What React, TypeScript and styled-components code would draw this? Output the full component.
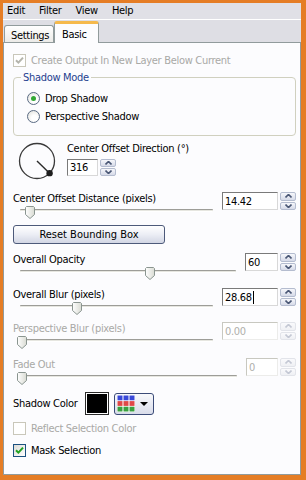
import { FC } from 'react';
import styled, { createGlobalStyle, css } from 'styled-components';

const GlobalStyle = createGlobalStyle`
	html, body {
		margin: 0;
		padding: 0;
		background: #ffffff;
	}
	body {
		font-family: "DejaVu Sans Condensed", "Liberation Sans", sans-serif;
		font-size: 11px;
		letter-spacing: -0.3px;
		color: #000000;
	}
	* {
		box-sizing: border-box;
	}
`;

const MENU = ['Edit', 'Filter', 'View', 'Help'];

type ChevronProps = { down?: boolean; disabled?: boolean };

const Chevron: FC<ChevronProps> = ({ down = false, disabled = false }) => (
	<svg width="7" height="4" viewBox="0 0 7 4">
		<polyline
			points={down ? '0.5,0.5 3.5,3.5 6.5,0.5' : '0.5,3.5 3.5,0.5 6.5,3.5'}
			fill="none"
			stroke={disabled ? '#c4c8d4' : '#4a5775'}
			strokeWidth="1.6"
		/>
	</svg>
);

type SpinFieldProps = {
	value: string;
	width: number;
	height?: number;
	disabled?: boolean;
	caret?: boolean;
};

const SpinField: FC<SpinFieldProps> = ({ value, width, height = 18, disabled = false, caret = false }) => (
	<SpinWrap>
		<SpinInput $width={width} $height={height} $disabled={disabled}>
			{value}
			{caret && <Caret />}
		</SpinInput>
		<SpinButtons $height={height}>
			<SpinButton $disabled={disabled}>
				<Chevron disabled={disabled} />
			</SpinButton>
			<SpinButton $disabled={disabled}>
				<Chevron down disabled={disabled} />
			</SpinButton>
		</SpinButtons>
	</SpinWrap>
);

const Slider: FC<{ value: number }> = ({ value }) => (
	<SliderBody>
		<Track />
		<Thumb style={{ left: `calc((100% - 10px) * ${value / 100})` }}>
			<svg width="10" height="13" viewBox="0 0 10 13">
				<defs>
					<linearGradient id="thumbFill" x1="0" y1="0" x2="1" y2="0">
						<stop offset="0" stopColor="#ffffff" />
						<stop offset="1" stopColor="#d9dbd3" />
					</linearGradient>
				</defs>
				<path d="M1.5 0.5 H8.5 L9.5 1.5 V8.5 L5 12.5 L0.5 8.5 V1.5 Z" fill="url(#thumbFill)" stroke="#8a9590" />
			</svg>
		</Thumb>
	</SliderBody>
);

type SliderRowProps = {
	label: string;
	value: string;
	width: number;
	percent: number;
	disabled?: boolean;
	caret?: boolean;
	gap: number;
};

const SliderRow: FC<SliderRowProps> = ({ label, value, width, percent, disabled = false, caret = false, gap }) => (
	<SliderGrid $gap={gap}>
		<RowLabel $disabled={disabled}>{label}</RowLabel>
		<SpinCell>
			<SpinField value={value} width={width} disabled={disabled} caret={caret} />
		</SpinCell>
		<Slider value={percent} />
	</SliderGrid>
);

const Check: FC<{ checked?: boolean; disabled?: boolean }> = ({ checked = false, disabled = false }) => (
	<CheckBox $disabled={disabled}>
		{checked && (
			<svg width="9" height="9" viewBox="0 0 9 9">
				<polyline
					points="1,4.2 3.4,6.6 8,1.6"
					fill="none"
					stroke={disabled ? '#b4b4ac' : '#21a121'}
					strokeWidth="2"
				/>
			</svg>
		)}
	</CheckBox>
);

const Dial: FC<{ degrees: number }> = ({ degrees }) => {
	const r = 17.5;
	const rad = (degrees * Math.PI) / 180;
	const x = 19 + r * Math.cos(rad);
	const y = 19 - r * Math.sin(rad);
	return (
		<svg width="38" height="38" viewBox="0 0 38 38">
			<circle cx="19" cy="19" r={r} fill="none" stroke="#3a3a3a" strokeWidth="1.3" />
			<line x1="19" y1="19" x2={x} y2={y} stroke="#2a2a2a" strokeWidth="1.4" />
			<circle cx={x} cy={y} r="3.2" fill="#1e1e1e" />
		</svg>
	);
};

const PaletteIcon: FC = () => (
	<svg width="18" height="17" viewBox="0 0 18 17">
		<rect x="0" y="0" width="18" height="17" fill="#ffffff" />
		{[0, 1, 2].map((row) =>
			[0, 1, 2].map((col) => (
				<rect
					key={`${row}-${col}`}
					x={col * 6 + 0.5}
					y={row * 5.6 + 0.5}
					width="5"
					height="4.8"
					fill={['#3848d8', '#e04848', '#3aa040'][row]}
				/>
			))
		)}
	</svg>
);

const App: FC = () => (
	<>
		<GlobalStyle />
		<Frame>
			<MenuBar>
				{MENU.map((item) => (
					<MenuItem key={item}>{item}</MenuItem>
				))}
			</MenuBar>
			<TabStrip>
				<Tab>Settings</Tab>
				<Tab $active>Basic</Tab>
			</TabStrip>
			<Panel>
				<CheckRow $gap={11}>
					<Check checked disabled />
					<Caption $disabled>Create Output In New Layer Below Current</Caption>
				</CheckRow>

				<Group>
					<Legend>Shadow Mode</Legend>
					<RadioRow>
						<Radio $selected />
						<Caption>Drop Shadow</Caption>
					</RadioRow>
					<RadioRow>
						<Radio />
						<Caption>Perspective Shadow</Caption>
					</RadioRow>
				</Group>

				<DialRow>
					<Dial degrees={316} />
					<DialControls>
						<RowLabel>Center Offset Direction (°)</RowLabel>
						<SpinField value="316" width={31} height={17} />
					</DialControls>
				</DialRow>

				<SliderRow label="Center Offset Distance (pixels)" value="14.42" width={56} percent={4.2} gap={12} />

				<PushButton>Reset Bounding Box</PushButton>

				<SliderRow label="Overall Opacity" value="60" width={33} percent={60.6} gap={9} />
				<SliderRow label="Overall Blur (pixels)" value="28.68" width={56} percent={29} caret gap={7} />
				<SliderRow label="Perspective Blur (pixels)" value="0.00" width={56} percent={0} disabled gap={6} />
				<SliderRow label="Fade Out" value="0" width={32} percent={0} disabled gap={8} />

				<ColorRow>
					<Caption>Shadow Color</Caption>
					<Swatch />
					<PaletteButton>
						<PaletteIcon />
						<DropArrow />
					</PaletteButton>
				</ColorRow>

				<CheckRow $gap={7}>
					<Check disabled />
					<Caption $disabled>Reflect Selection Color</Caption>
				</CheckRow>
				<CheckRow $gap={9}>
					<Check checked />
					<Caption>Mask Selection</Caption>
				</CheckRow>
			</Panel>
		</Frame>
	</>
);

const Frame = styled.div`
	width: 306px;
	height: 480px;
	border-style: solid;
	border-color: #e57d25;
	border-width: 3px 5px 5px 3px;
	background: #dedee4;
	display: flex;
	flex-direction: column;
`;

const MenuBar = styled.div`
	height: 17px;
	display: flex;
	align-items: center;
	padding-left: 4px;
	gap: 14px;
	border-bottom: 1px solid #ffffff;
	background: #e0e0e6;
`;

const MenuItem = styled.span`
	line-height: 14px;
`;

const TabStrip = styled.div`
	height: 22px;
	display: flex;
	align-items: flex-end;
	padding-left: 1px;
`;

const Tab = styled.div<{ $active?: boolean }>`
	position: relative;
	display: flex;
	align-items: center;
	border: 1px solid #919b9c;
	border-bottom: none;
	border-radius: 3px 3px 0 0;
	${(props) =>
		props.$active
			? css`
					z-index: 1;
					width: 45px;
					height: 22px;
					margin-bottom: -1px;
					padding: 1px 0 0 7px;
					background: #fcfcfe;
					border-top: 3px solid #f5b94c;
			  `
			: css`
					width: 50px;
					height: 17px;
					padding: 2px 0 0 6px;
					background: linear-gradient(#ffffff, #ecebe8);
			  `}
`;

const Panel = styled.div`
	flex: 1;
	display: flex;
	flex-direction: column;
	background: #fcfcfe;
	border: 1px solid #919b9c;
	padding: 0 4px 0 9px;
`;

const Caption = styled.span<{ $disabled?: boolean }>`
	line-height: 14px;
	white-space: nowrap;
	color: ${(props) => (props.$disabled ? '#a9a9a6' : '#000000')};
`;

const RowLabel = styled(Caption)`
	display: block;
`;

const CheckRow = styled.div<{ $gap: number }>`
	display: flex;
	align-items: center;
	gap: 5px;
	height: 13px;
	margin-top: ${(props) => props.$gap}px;
`;

const CheckBox = styled.span<{ $disabled: boolean }>`
	width: 13px;
	height: 13px;
	display: flex;
	align-items: center;
	justify-content: center;
	border: 1px solid ${(props) => (props.$disabled ? '#c9c7ba' : '#1c5180')};
	background: ${(props) => (props.$disabled ? '#ffffff' : 'linear-gradient(135deg, #dcdcd7, #ffffff)')};
`;

const Group = styled.fieldset`
	margin: 4px 0 0;
	padding: 8px 0 12px 13px;
	border: 1px solid #d0d0bf;
	border-radius: 4px;
	display: flex;
	flex-direction: column;
	gap: 5px;
`;

const Legend = styled.legend`
	margin-left: -6px;
	padding: 0 2px;
	line-height: 13px;
	color: #1f3f8f;
`;

const RadioRow = styled.div`
	display: flex;
	align-items: center;
	gap: 5px;
	height: 13px;
`;

const Radio = styled.span<{ $selected?: boolean }>`
	width: 13px;
	height: 13px;
	border-radius: 50%;
	border: 1px solid #5a6b84;
	background: radial-gradient(circle at 60% 65%, #ffffff 30%, #dcdcd6);
	display: flex;
	align-items: center;
	justify-content: center;
	&::after {
		content: '';
		width: 5px;
		height: 5px;
		border-radius: 50%;
		background: ${(props) => (props.$selected ? '#33a833' : 'transparent')};
	}
`;

const DialRow = styled.div`
	display: flex;
	align-items: flex-start;
	gap: 11px;
	margin-top: 6px;
	padding-left: 5px;
`;

const DialControls = styled.div`
	display: flex;
	flex-direction: column;
	gap: 3px;
`;

const SliderGrid = styled.div<{ $gap: number }>`
	display: grid;
	grid-template-columns: 1fr auto;
	grid-template-rows: 14px 14px;
	column-gap: 6px;
	margin-top: ${(props) => props.$gap}px;
`;

const SpinCell = styled.div`
	grid-column: 2;
	grid-row: 1 / span 2;
`;

const SpinWrap = styled.div`
	display: flex;
	gap: 2px;
`;

const SpinInput = styled.div<{ $width: number; $height: number; $disabled: boolean }>`
	width: ${(props) => props.$width}px;
	height: ${(props) => props.$height}px;
	display: flex;
	align-items: center;
	padding-left: 2px;
	background: #ffffff;
	border: 1px solid;
	border-color: ${(props) =>
		props.$disabled ? '#c8c8c0 #ececea #ececea #c8c8c0' : '#7a7a7a #d8d8d8 #d8d8d8 #7a7a7a'};
	color: ${(props) => (props.$disabled ? '#b0b0ac' : '#000000')};
`;

const Caret = styled.span`
	width: 1px;
	height: 13px;
	background: #000000;
	margin-left: 1px;
`;

const SpinButtons = styled.div<{ $height: number }>`
	width: 16px;
	height: ${(props) => props.$height}px;
	display: flex;
	flex-direction: column;
	gap: 1px;
`;

const SpinButton = styled.div<{ $disabled: boolean }>`
	flex: 1;
	display: flex;
	align-items: center;
	justify-content: center;
	border-radius: 2px;
	border: 1px solid ${(props) => (props.$disabled ? '#e2e4ea' : '#b4bccf')};
	background: ${(props) =>
		props.$disabled ? 'linear-gradient(#fafafc, #eff0f4)' : 'linear-gradient(#f6f7fb, #d6dae8)'};
`;

const SliderBody = styled.div`
	grid-column: 1;
	position: relative;
	height: 14px;
	margin-left: 4px;
`;

const Track = styled.div`
	position: absolute;
	left: 3px;
	right: 3px;
	top: 3px;
	height: 3px;
	border-top: 1px solid #9d9d98;
	border-bottom: 1px solid #ffffff;
	background: #e6e6e0;
	border-radius: 1px;
`;

const Thumb = styled.div`
	position: absolute;
	top: 0;
	width: 10px;
	height: 13px;
	line-height: 0;
`;

const PushButton = styled.button`
	margin-top: 5px;
	width: 152px;
	height: 19px;
	padding: 0;
	font: inherit;
	color: #000000;
	border: 1px solid #4d5a7a;
	border-radius: 3px;
	background: linear-gradient(#ffffff, #eceef5 50%, #d2d6e4);
	text-align: center;
`;

const ColorRow = styled.div`
	display: flex;
	align-items: center;
	margin-top: 6px;
	height: 23px;
	& > span:first-child {
		width: 72px;
	}
`;

const Swatch = styled.div`
	width: 24px;
	height: 23px;
	border: 1px solid #2a2a2a;
	box-shadow: inset 0 0 0 1px #ffffff;
	background: #000000;
`;

const PaletteButton = styled.div`
	margin-left: 5px;
	width: 40px;
	height: 22px;
	display: flex;
	align-items: center;
	gap: 5px;
	padding-left: 2px;
	border: 1px solid #3b4b78;
	border-radius: 3px;
	background: linear-gradient(#f8f9fc, #d9dcea);
`;

const DropArrow = styled.span`
	width: 0;
	height: 0;
	border-left: 4px solid transparent;
	border-right: 4px solid transparent;
	border-top: 4px solid #000000;
`;

export default App;
